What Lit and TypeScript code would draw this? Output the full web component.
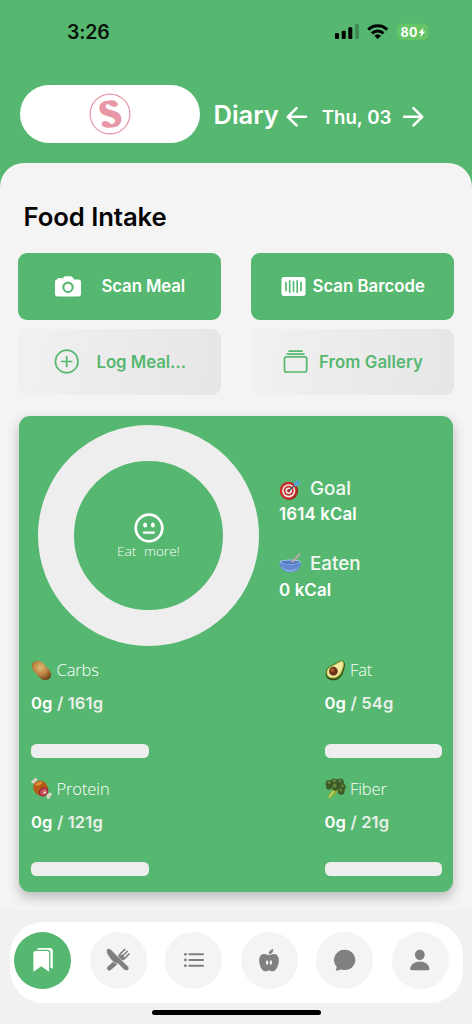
import { LitElement, html, css, svg } from "lit";
import { customElement, property } from "lit/decorators.js";

const potato = svg`
  <defs><radialGradient id="po" cx=".45" cy=".35" r=".7"><stop offset="0" stop-color="#e3bd78"/><stop offset=".5" stop-color="#bd8545"/><stop offset="1" stop-color="#70421c"/></radialGradient></defs>
  <path d="M.8 6.500C.7 2.500 4.400.2 8.500 1c3.500.8 5.200 3.400 7.300 5.800 2.300 2.600 5.300 4.900 5.200 8.700-.1 3.900-3.700 6.300-7.400 5.500-3.300-.6-4.700-3-6.900-5.400C4.500 13 1 10.600.8 6.500z" fill="url(#po)"/>
  <path d="M5.500 5.500l1 .4M10 6.500l1 .8M12.500 12l.8.6M16 15l.7.5" stroke="#a06c35" stroke-width=".6"/>`;
const avocado = svg`
  <path d="M19.500 1.300c2.200 2.200 1.300 6.500-.2 11-1.700 5.400-5.700 9.200-11 9C3.500 21.100.4 18 .8 13.200 1.200 8.300 5 6.700 9.300 4.500 13 2.600 17.300-.9 19.500 1.300z" fill="#354416"/>
  <path d="M19 1.300c1.800 1.800.7 6.100-.8 10.200-1.800 5-5.500 8-10 7.900C3.700 19.300 1.200 17 1.500 12.800c.3-4.200 4-5.900 8-8C13 3 17.300-.3 19 1.300z" fill="#a8b544"/>
  <path d="M18.300 2.200c1.300 1.400.2 5.300-1.200 8.900-1.700 4.400-4.900 7-8.800 7-3.800 0-6-1.900-5.800-5.300.2-3.800 3.600-5.200 7.400-7.200 3.400-1.800 7.100-4.700 8.400-3.400z" fill="#f0eba0"/>
  <circle cx="8.800" cy="11.800" r="4.600" fill="#6d3216"/><circle cx="7.800" cy="10.600" r="2" fill="#a65f35"/>`;
const meat = svg`
  <path d="M3.500 4.500L6 7M15 16l4.500 2.800" stroke="#cfc8b8" stroke-width="2.800"/>
  <g fill="#ddd6c8"><circle cx="2.100" cy="3.800" r="1.800"/><circle cx="4.600" cy="2" r="1.900"/><circle cx="20" cy="17.300" r="1.900"/><circle cx="18.200" cy="20" r="1.900"/></g>
  <path d="M2.200 9C2.800 4.500 7.500 1.600 12 3.200c4.300 1.700 6.500 6.500 6 10.800-.5 3.800-3.300 6-7 5.300C6.500 18.300 1.500 13.700 2.200 9z" fill="#b65a17"/>
  <path d="M4 8c1.800-3.500 5-4.700 8.300-3.500-1 2.500-5.300 4-8.300 3.500z" fill="#df9138"/>
  <ellipse cx="13.200" cy="14.300" rx="5.200" ry="4.400" transform="rotate(-38 13.200 14.300)" fill="#8b2533"/>
  <ellipse cx="13.400" cy="14.500" rx="4" ry="3.300" transform="rotate(-38 13.400 14.500)" fill="#cb5260"/>
  <circle cx="14.300" cy="15.300" r="1.300" fill="#f0d7c7"/>`;
const broccoli = svg`
  <path d="M2 19.500l6.800-9.300 6 3.800-3 1.200-1 3.800-1.800-1.300L6 22z" fill="#86ad3e"/>
  <path d="M4.500 20l5-6.500" stroke="#b9d670" stroke-width="1.700"/>
  <g fill="#3c5a26"><circle cx="4.500" cy="6" r="3.800"/><circle cx="9.800" cy="4.200" r="3.800"/><circle cx="15.800" cy="4.500" r="3.900"/><circle cx="18.300" cy="9.500" r="3.400"/><circle cx="17" cy="14" r="3.500"/><circle cx="11" cy="9" r="4.300"/><circle cx="4" cy="9.500" r="2.800"/></g>
  <g fill="#668540"><circle cx="4.200" cy="4.800" r="1.700"/><circle cx="9.800" cy="2.800" r="1.700"/><circle cx="15.800" cy="3" r="1.700"/><circle cx="10" cy="8" r="2.200"/><circle cx="18.300" cy="8.300" r="1.500"/><circle cx="16.500" cy="12.800" r="1.500"/></g>`;
const target = svg`
  <circle cx="10" cy="13" r="9" fill="#8d1d18"/><circle cx="9.400" cy="12.500" r="8.700" fill="#c93028"/><circle cx="9.700" cy="12.800" r="6.600" fill="#f3eeee"/><circle cx="9.700" cy="12.800" r="5" fill="#c62d27"/><circle cx="9.700" cy="12.800" r="3.300" fill="#f5eded"/><circle cx="9.700" cy="12.800" r="1.700" fill="#c02a25"/>
  <path d="M10 12.500L18 5" stroke="#39525e" stroke-width="1.200"/>
  <path d="M14.800 7.700l1-4.200L19.500 1l-.1 2.800 3.100.2-2.800 3.600-4.200.7z" fill="#58a9c9"/>`;
const bowl = svg`
  <path d="M.4 9c0 6 3.900 10.200 10.900 10.200S22 15 22 9z" fill="#6288d0"/>
  <path d="M2 12c1.500 3 5 4.700 9 4.700s6.500-1.300 8.500-3.200c-1.500 3.900-4.300 5.500-8.500 5.500-4.500 0-7.500-2.300-9-7z" fill="#83a6e4"/>
  <ellipse cx="11.200" cy="9" rx="10.800" ry="2.500" fill="#a9c5f2"/><ellipse cx="11.200" cy="9.200" rx="9.500" ry="1.700" fill="#5279c2"/>
  <path d="M13.500 8.500L20.500 1.300" stroke="#b9a9a2" stroke-width="2.200" stroke-linecap="round"/>`;

const emoji = (art: unknown) => html`<svg class="emoji" width="22" height="22" viewBox="0 0 22 22" fill="none">${art}</svg>`;

@customElement("macro-stat")
class MacroStat extends LitElement {
  @property() label = "";
  @property() total = "";
  @property({ attribute: false }) art: unknown;
  static styles = css`
    :host { display: block; width: 117.500px; height: 118.500px; color: #fff; }
    .name { display: flex; align-items: center; height: 22px; gap: 4.500px; font: 350 16.500px/22px "Open Sans", "Noto Sans", sans-serif; letter-spacing: -0.100px; }
    .emoji { display: block; width: 21px; height: 21px; flex: none; }
    .value { margin-top: 11px; font: 600 16.600px/22px Inter, sans-serif; letter-spacing: 0.130px; white-space: nowrap; }
    .dim { color: #e9efe9; }
    .track { margin-top: 29.500px; height: 14px; border-radius: 5.500px; background: #eee; }
  `;
  render() {
    return html`
      <div class="name">${emoji(this.art)}<span>${this.label}</span></div>
      <div class="value">0g<span class="dim"> / ${this.total}</span></div>
      <div class="track"></div>`;
  }
}

@customElement("app-root")
class AppRoot extends LitElement {
  static styles = css`
    :host { display: flex; flex-direction: column; width: 472px; height: 1024px; overflow: hidden; background: #56b870; font-family: Inter, "Liberation Sans", sans-serif; }
    * { box-sizing: border-box; }
    svg { display: block; flex: none; }
    .status { display: flex; align-items: center; height: 64px; padding: 0 42px 0 67px; flex: none; }
    .time { flex: 1; font-size: 19.500px; font-weight: 600; letter-spacing: -0.200px; color: #07130a; }
    .header { display: flex; align-items: center; height: 99px; padding: 2px 0 0 20px; flex: none; color: #fff; }
    .brand { display: flex; align-items: center; justify-content: center; width: 180px; height: 58px; border-radius: 29px; background: #fff; margin-top: -1px; }
    .diary { width: 86px; padding-left: 13.500px; font-size: 25.500px; line-height: 30px; font-weight: 600; }
    .date { margin-top: 6px; width: 95px; padding-left: 2px; text-align: center; font-size: 18.700px; line-height: 24px; font-weight: 600; }
    .arrow { margin-top: 4px; }
    .sheet { flex: none; height: 747px; border-radius: 24px 24px 0 0; background: #f4f4f4; padding: 39px 18px 0; }
    h1 { margin: 0 0 0 5.500px; height: 29px; font-size: 25.700px; line-height: 29px; font-weight: 600; letter-spacing: -0.080px; color: #050505; }
    .actions { display: grid; grid-template-columns: 203px 203px; column-gap: 30px; row-gap: 9px; margin-top: 22px; }
    .btn { display: flex; align-items: center; height: 66.500px; border-radius: 9px; font-size: 16.800px; font-weight: 600; white-space: nowrap; color: #56b870; background: linear-gradient(100deg, #f1f1f1, #e6e6e6); }
    .primary { color: #fff; background: #56b870; }
    .b1 { padding-left: 37px; gap: 20.500px; letter-spacing: -0.120px; } .b2 { padding-left: 30px; gap: 6.500px; } .b3 { padding-left: 36px; gap: 17.500px; letter-spacing: -0.050px; } .b4 { padding-left: 32px; gap: 11px; letter-spacing: 0.080px; }
    .card { margin: 21px 1px 0; height: 476px; border-radius: 11px; background: #56b870; box-shadow: 0 5px 12px rgba(0,0,0,.25); padding: 9px 11px 0 12px; color: #fff; }
    .top { display: flex; height: 221px; }
    .ring { display: flex; flex-direction: column; align-items: center; width: 221px; height: 221px; margin-left: 7px; border: 36px solid #eee; border-radius: 50%; padding-top: 52px; }
    .hint { margin-top: -1.500px; font: 350 13.600px/18px "Open Sans", "Noto Sans", sans-serif; word-spacing: 4px; white-space: nowrap; }
    .totals { margin: 51px 0 0 20px; }
    .label { display: flex; align-items: center; gap: 9px; height: 24px; font-size: 18.800px; font-weight: 500; color: #f4f8f4; }
    .label .emoji { margin-top: 1px; }
    .kcal { height: 22px; margin: 3px 0 26.500px; font-size: 16.900px; line-height: 22px; font-weight: 600; letter-spacing: 0.120px; }
    .macros { display: grid; grid-template-columns: 117.500px 117.500px; justify-content: space-between; margin-top: 13px; }
    .foot { display: flex; flex-direction: column; align-items: center; flex: 1; background: #f1f1f1; padding-top: 12px; }
    .nav { display: flex; width: 453px; height: 81px; border-radius: 33px; background: #fff; padding: 9.500px 14px 9.500px 4.500px; justify-content: space-between; }
    .tab { display: flex; align-items: center; justify-content: center; width: 57px; height: 57px; border-radius: 50%; background: #f4f4f4; color: #808080; }
    .active { background: #56b870; color: #fff; }
    .home { width: 169px; height: 5.500px; border-radius: 3px; background: #000; margin-top: 6.500px; }
  `;
  render() {
    return html`
      <div class="status">
        <span class="time">3:26</span>
        <svg width="96" height="20" viewBox="334 22 96 20">
          <rect x="335" y="33" width="4" height="6" rx="1"/><rect x="341.700" y="30.800" width="4" height="8.200" rx="1"/><rect x="348.300" y="27.300" width="4" height="11.700" rx="1"/><rect x="355" y="24" width="4" height="15" rx="1" opacity=".25"/>
          <g fill="none" stroke="#000" stroke-width="3"><path d="M368.200 29.600a13.700 13.700 0 0 1 19 0M371.900 33.300a8.500 8.500 0 0 1 11.600 0"/></g><path d="M374.300 35.800a5 5 0 0 1 6.800 0l-3.400 3.300z"/>
          <rect x="397" y="23.700" width="31" height="16.300" rx="5" fill="#65c466"/><path d="M429 29.500q1.500 2 0 4.500z" fill="#65c466"/>
          <text x="400.500" y="36.500" fill="#fff" font-size="12.500" font-weight="700" font-family="Inter" textLength="17">80</text>
          <path d="M423.500 27.500l-5 5.500h2.800l-1.200 4.500 5.300-6h-2.900z" fill="#fff"/>
        </svg>
      </div>
      <div class="header">
        <div class="brand">
          <svg width="42" height="42" viewBox="0 0 42 42" fill="#e797a6">
            <circle cx="21" cy="21" r="19.900" fill="none" stroke="#e797a6" stroke-width="1.200"/>
            <text x="8.500" y="34" font-family="Liberation Serif" font-weight="700" font-size="39" stroke="#e797a6" stroke-width="1.200" textLength="25" lengthAdjust="spacingAndGlyphs">S</text>
            <path d="M22.500 6.500H31V17h-4.500zM8 24.500h6.500l4.500 11H8z" fill="#fff"/>
            <ellipse cx="24" cy="10.600" rx="5" ry="3.100" transform="rotate(15 24 10.600)"/><ellipse cx="17.300" cy="31.400" rx="4.700" ry="3.100" transform="rotate(15 17.300 31.400)"/>
          </svg>
        </div>
        <span class="diary">Diary</span>
        <svg class="arrow" width="22" height="22" viewBox="286 106 22 22" fill="none" stroke="#fff" stroke-width="2.600" stroke-linecap="round" stroke-linejoin="round"><path d="M306 116.800h-18M296.500 108.200l-8.700 8.600 8.700 8.600"/></svg>
        <span class="date">Thu, 03</span>
        <svg class="arrow" width="22" height="22" viewBox="403 106 22 22" fill="none" stroke="#fff" stroke-width="2.600" stroke-linecap="round" stroke-linejoin="round"><path d="M404 116.800h18M413.500 108.200l8.700 8.600-8.700 8.600"/></svg>
      </div>
      <div class="sheet">
        <h1>Food Intake</h1>
        <div class="actions">
          <div class="btn primary b1">
            <svg width="26" height="21" viewBox="0 0 26 21"><path fill="#fff" fill-rule="evenodd" d="M2.800 3.200V2.100h4v1L9 .8Q9.500.2 10.300.2h5.400q.8 0 1.300.6l2.300 2.600h4.200Q26 3.400 26 5.800v12.400q0 2.300-2.500 2.300h-21Q0 20.500 0 18.200V5.800Q0 3.200 2.800 3.200zM13 5.600a5.700 5.700 0 1 0 0 11.400 5.700 5.700 0 0 0 0-11.400zm0 2.100a3.600 3.600 0 1 1 0 7.200 3.600 3.600 0 0 1 0-7.200z"/></svg>
            <span>Scan Meal</span>
          </div>
          <div class="btn primary b2">
            <svg width="25" height="19" viewBox="0 0 25 19"><rect x=".5" width="24" height="19" rx="2.500" fill="#fff"/><path d="M5 5.500v8M8.700 3.800v11.400M12.500 4.700v9.600M16.200 3.800v11.400M20 5.500v8" stroke="#56b870" stroke-width="1.700" stroke-linecap="round"/></svg>
            <span>Scan Barcode</span>
          </div>
          <div class="btn b3">
            <svg width="25" height="25" viewBox="0 0 25 25" fill="none" stroke="#56b870" stroke-width="1.700" stroke-linecap="round"><circle cx="12.700" cy="12.500" r="11.300"/><path d="M12.700 7.500v10M7.700 12.500h10"/></svg>
            <span>Log Meal…</span>
          </div>
          <div class="btn b4">
            <svg width="25" height="23" viewBox="0 0 25 23" fill="none" stroke="#56b870" stroke-width="1.700" stroke-linecap="round"><rect x="1.500" y="6.900" width="22.200" height="15.100" rx="1.800"/><path d="M4.200 4.100h16.800M6.200 1.200h12.800"/></svg>
            <span>From Gallery</span>
          </div>
        </div>
        <div class="card">
          <div class="top">
            <div class="ring">
              <svg width="30" height="30" viewBox="0 0 30 30" fill="none" stroke="#fff"><circle cx="15" cy="15" r="13.300" stroke-width="2.700"/><path d="M10 19.600h10" stroke-width="2.200" stroke-linecap="round"/><ellipse cx="11.100" cy="12" rx="2" ry="2.500" fill="#fff" stroke="none"/><ellipse cx="18.900" cy="12" rx="2" ry="2.500" fill="#fff" stroke="none"/></svg>
              <span class="hint">Eat more!</span>
            </div>
            <div class="totals">
              <div class="label">${emoji(target)}<span>Goal</span></div>
              <div class="kcal">1614 kCal</div>
              <div class="label">${emoji(bowl)}<span>Eaten</span></div>
              <div class="kcal">0 kCal</div>
            </div>
          </div>
          <div class="macros">
            <macro-stat label="Carbs" total="161g" .art=${potato}></macro-stat>
            <macro-stat label="Fat" total="54g" .art=${avocado}></macro-stat>
            <macro-stat label="Protein" total="121g" .art=${meat}></macro-stat>
            <macro-stat label="Fiber" total="21g" .art=${broccoli}></macro-stat>
          </div>
        </div>
      </div>
      <div class="foot">
        <div class="nav">
          <div class="tab active"><svg width="24" height="26" viewBox="30 947 24 26" fill="currentColor"><path d="M32.400 953q0-2 2-2h11.500q2.200 0 2.200 2v18.800l-7.800-5.600-7.900 5.600z"/><path d="M35.700 949.700q.4-1.700 2.500-1.700h10.300q3.300 0 3.300 3.200v17.500l-2.400-1.200v-14.700q0-3.100-3.200-3.100z"/></svg></div>
          <div class="tab"><svg width="24" height="24" viewBox="0 0 24 24" fill="none" stroke="currentColor"><path d="M3.300 20.200L16 9" stroke-width="4.600" stroke-linecap="round"/><path d="M13.500 11q-1.300-3.300 1-5.300l4.300-4.200M13.500 11q3.500 1.500 5.300-.7L23 6M15.500 9l5.700-5.500" stroke-width="1.700" stroke-linecap="round"/><path d="M1 1.100c1.700-1.300 3.500-.1 4.700 1.100l7.600 7.700 8.400 8c3.100 3-.9 6.400-3.900 3.700l-5.900-6.300q-2.600.7-4.700-1.500C3.700 10 -.9 4.800 1 1.100z" fill="currentColor" stroke="#f4f4f4" stroke-width=".5"/></svg></div>
          <div class="tab"><svg width="20" height="14" viewBox="0 0 20 14" fill="none" stroke="currentColor" stroke-width="2" stroke-linecap="round"><path d="M5.300 1.300H19M5.300 7H19M5.300 12.700H19"/><g fill="currentColor" stroke="none"><circle cx="1.400" cy="1.300" r="1.400"/><circle cx="1.400" cy="7" r="1.400"/><circle cx="1.400" cy="12.700" r="1.400"/></g></svg></div>
          <div class="tab"><svg width="20" height="23" viewBox="0 0 20 23" fill="currentColor"><path d="M9.800 5.500q-.3-4.500 4.400-5.500.3 4.500-4.400 5.500z"/><path fill-rule="evenodd" d="M10 6.300c1.500 0 2.800-1.200 5-1.200 3.100 0 4.800 2.500 4.800 6.300 0 5.200-2.900 10.900-6.300 10.900-1.500 0-2-.8-3.500-.8s-2 .8-3.500.8C3.100 22.300.2 16.600.2 11.400.2 7.600 1.900 5.100 5 5.100c2.200 0 3.500 1.200 5 1.200zM8.200 11.200c-1.600 0-1.700 4.500 0 4.500s1.300-4.500 0-4.500zm3.600 0c-1.300 0-1.700 4.500 0 4.500s1.600-4.500 0-4.500z"/></svg></div>
          <div class="tab"><svg width="22" height="22" viewBox="0 0 22 22" fill="currentColor"><path d="M11 .7a10.200 10.200 0 1 1-4.100 19.500q-1.500 1.300-4.600 1.200-1 0-.3-1 .9-1.500.5-3A10.200 10.200 0 0 1 11 .7z"/></svg></div>
          <div class="tab"><svg width="20" height="22" viewBox="0 0 20 22" fill="currentColor"><ellipse cx="9.800" cy="5.800" rx="4.900" ry="5.200"/><path d="M.2 19.500c.5-4 4.500-7 9.600-7s9.100 3 9.600 7c.1 1.300-.4 1.700-1.500 1.700H1.700C.6 21.200.1 20.800.2 19.500z"/></svg></div>
        </div>
        <div class="home"></div>
      </div>`;
  }
}
